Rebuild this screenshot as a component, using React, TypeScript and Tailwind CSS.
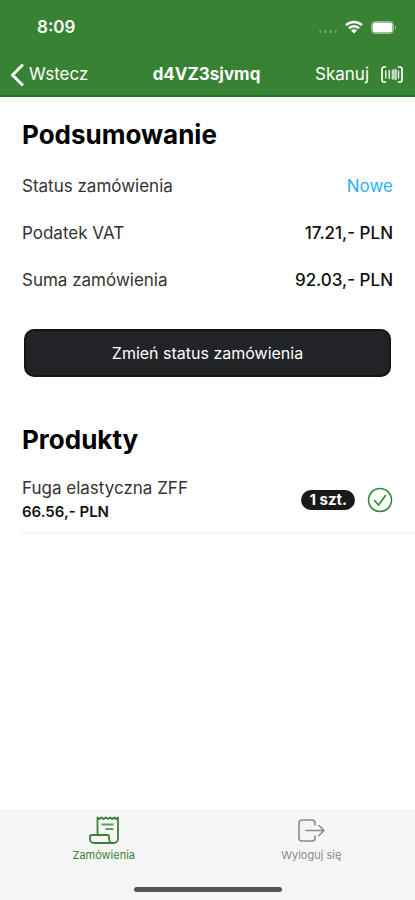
import type { ReactNode } from "react";

type Row = { label: string; value: string; highlight?: boolean };

const summary: Row[] = [
  { label: "Status zamówienia", value: "Nowe", highlight: true },
  { label: "Podatek VAT", value: "17.21,- PLN" },
  { label: "Suma zamówienia", value: "92.03,- PLN" },
];

const products = [{ name: "Fuga elastyczna ZFF", price: "66.56,- PLN", amount: "1 szt." }];

function WifiIcon() {
  return (
    <svg width="18" height="14" viewBox="0 0 18 14" fill="none" stroke="currentColor" strokeWidth="2.5">
      <path d="M1 5.2a11.3 11.3 0 0 1 16 0" />
      <path d="M4 8.4a7 7 0 0 1 10 0" />
      <path d="M9 13.6 6 10.6a4.2 4.2 0 0 1 6 0Z" fill="currentColor" stroke="none" />
    </svg>
  );
}

function BatteryIcon() {
  return (
    <svg width="26" height="13" viewBox="0 0 26 13" fill="none">
      <rect x="0.5" y="0.5" width="22" height="12" rx="3.5" stroke="#fff" strokeOpacity="0.45" />
      <rect x="1.5" y="1.5" width="20" height="10" rx="2.5" fill="#fff" />
      <path d="M24 4.5c1.6.6 1.6 3.4 0 4Z" fill="#fff" fillOpacity="0.5" />
    </svg>
  );
}

function BarcodeIcon() {
  return (
    <svg width="22" height="17" viewBox="0 0 22 17" fill="none" stroke="currentColor" strokeWidth="1.7" strokeLinecap="round">
      <path d="M4.5 1H3a2 2 0 0 0-2 2v11a2 2 0 0 0 2 2h1.5M17.5 1H19a2 2 0 0 1 2 2v11a2 2 0 0 1-2 2h-1.5" />
      <path d="M4.8 5v7M8.2 4.5v8" strokeWidth="1.3" />
      <path d="M11.9 4.5v8M14.6 4v9" strokeWidth="2.5" opacity="0.7" />
      <path d="M17.5 5v7" strokeWidth="1.3" />
    </svg>
  );
}

function ReceiptIcon() {
  return (
    <svg width="30" height="28" viewBox="0 0 30 28" fill="none" stroke="currentColor" strokeWidth="1.8" strokeLinejoin="round">
      <path d="M8.5 19V1.5l2 1.5 2-1.5 2 1.5 2.2-1.5L19 3l2.2-1.5 2 1.5 2-1.5L27 3l2-1.5V23a4.5 4.5 0 0 1-4.5 4" />
      <path d="M24.5 27H5a4 4 0 0 1-4-4v-2.5A1.5 1.5 0 0 1 2.5 19h16a1.5 1.5 0 0 1 1.5 1.5V23a4.3 4.3 0 0 0 4.5 4Z" />
      <path d="M12.500 8.500h12M16.500 13h8" stroke="#5d9a5b" />
    </svg>
  );
}

function LogoutIcon() {
  return (
    <svg width="27" height="23" viewBox="0 0 27 23" fill="none" stroke="currentColor" strokeWidth="1.6" strokeLinecap="round" strokeLinejoin="round">
      <path d="M17 6V4a3 3 0 0 0-3-3H4a3 3 0 0 0-3 3v15a3 3 0 0 0 3 3h10a3 3 0 0 0 3-3v-2" />
      <path d="M8 11.5h18M21 6.5l5 5-5 5" />
    </svg>
  );
}

function SectionTitle({ children }: { children: ReactNode }) {
  return <h2 className="text-[26px] leading-8 font-bold text-black">{children}</h2>;
}

function Header() {
  return (
    <header className="bg-[#388234] text-white border-b-2 border-[#1f7420]">
      <div className="flex items-end justify-between h-10 pl-[37px] pr-[18px]">
        <span className="text-[17px] leading-[26px] font-semibold">8:09</span>
        <div className="flex items-center h-[26px] gap-2">
          <div className="flex gap-[2px] pt-2">
            {[0, 1, 2, 3].map((dot) => (
              <span key={dot} className="size-[3px] rounded-full bg-white/25" />
            ))}
          </div>
          <WifiIcon />
          <BatteryIcon />
        </div>
      </div>
      <nav className="grid grid-cols-[1fr_auto_1fr] items-center h-[55px] pt-[14px] pl-[10px] pr-3">
        <a href="#orders" className="flex items-center gap-[5px] text-[17px]">
          <svg width="14" height="24" viewBox="0 0 14 24" fill="none" stroke="currentColor" strokeWidth="3" strokeLinecap="round" strokeLinejoin="round">
            <path d="M12 2.5 2.5 12l9.500 9.500" />
          </svg>
          Wstecz
        </a>
        <h1 className="text-[17px] font-bold">d4VZ3sjvmq</h1>
        <button type="button" className="flex items-center justify-self-end gap-3 text-[17px]">
          Skanuj
          <BarcodeIcon />
        </button>
      </nav>
    </header>
  );
}

export default function App() {
  return (
    <div className="flex flex-col min-h-screen bg-white font-[Inter,sans-serif]">
      <Header />

      <main className="flex-1 pt-[22px]">
        <section className="px-[22px]">
          <SectionTitle>Podsumowanie</SectionTitle>
          <dl className="pt-3">
            {summary.map((row) => (
              <div key={row.label} className="flex items-center justify-between h-[47px] text-[17px]">
                <dt className="text-[#333]">{row.label}</dt>
                <dd className={row.highlight ? "text-[#2bb0f5]" : "font-medium text-[#111]"}>{row.value}</dd>
              </div>
            ))}
          </dl>
          <div className="px-[2px] pt-[25px]">
            <button type="button" className="w-full h-12 rounded-[10px] border-2 border-[#141518] bg-[#212326] text-base text-white">
              Zmień status zamówienia
            </button>
          </div>
        </section>

        <section className="pt-[47px] pl-[22px]">
          <SectionTitle>Produkty</SectionTitle>
          <ul className="pt-5">
            {products.map((product) => (
              <li
                key={product.name}
                className="flex items-center justify-between pb-2 pr-[22px] border-b-2 border-[#f3f3f3]"
              >
                <div>
                  <p className="text-[17px] leading-6 text-[#333]">{product.name}</p>
                  <p className="text-[15px] leading-6 font-semibold text-[#111]">{product.price}</p>
                </div>
                <div className="flex items-center gap-3">
                  <span className="flex items-center h-5 px-2 rounded-full bg-[#18191b] text-[15px] font-bold text-white">
                    {product.amount}
                  </span>
                  <svg width="26" height="26" viewBox="0 0 26 26" fill="none" stroke="#2a8632" strokeWidth="1.5" strokeLinecap="round" strokeLinejoin="round">
                    <circle cx="13" cy="13" r="11.5" />
                    <path d="m7.5 13.5 4 4.5 7-9.5" />
                  </svg>
                </div>
              </li>
            ))}
          </ul>
        </section>
      </main>

      <footer className="bg-[#f6f6f6]">
        <nav className="grid grid-cols-2 pt-[7px] text-[11px] leading-4">
          <a href="#orders" className="flex flex-col items-center gap-[3px] text-[#388234]">
            <span className="flex items-center h-7">
              <ReceiptIcon />
            </span>
            Zamówienia
          </a>
          <a href="#logout" className="flex flex-col items-center gap-[3px] text-[#8a8a8a]">
            <span className="flex items-center h-7">
              <LogoutIcon />
            </span>
            Wyloguj się
          </a>
        </nav>
        <div className="flex justify-center pt-6 pb-2">
          <div className="w-[148px] h-[5px] rounded-full bg-[#555]" />
        </div>
      </footer>
    </div>
  );
}
